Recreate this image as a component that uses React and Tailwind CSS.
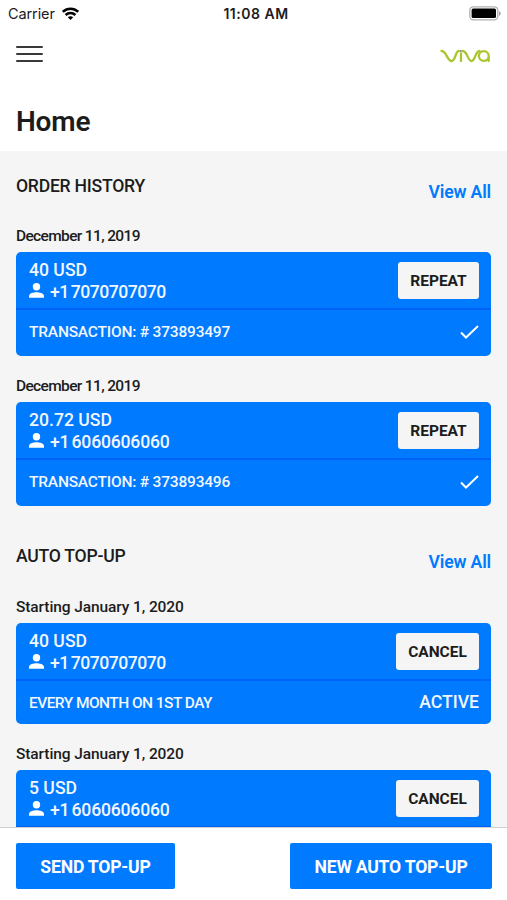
const orders = [
  { date: 'December 11, 2019', amount: '40 USD', phone: '+1 7070707070', phoneClass: 'tracking-[-0.5px]', transaction: '373893497' },
  { date: 'December 11, 2019', amount: '20.72 USD', phone: '+1 6060606060', phoneClass: 'tracking-[-0.2px]', transaction: '373893496' },
]

const topUps = [
  { date: 'Starting January 1, 2020', amount: '40 USD', phone: '+1 7070707070', phoneClass: 'tracking-[-0.5px]', schedule: 'EVERY MONTH ON 1ST DAY', status: 'ACTIVE' },
  { date: 'Starting January 1, 2020', amount: '5 USD', phone: '+1 6060606060', phoneClass: 'tracking-[-0.2px]' },
]

function StatusBar() {
  return (
    <div className="grid h-7 grid-cols-3 items-center pl-[8px] pr-[6px] leading-none text-[#1c1c1c]">
      <div className="flex items-center gap-[7px]">
        <span className="font-['Inter'] text-[14.5px] tracking-[-0.1px]">Carrier</span>
        <svg className="-mt-[2px]" width="17" height="13" viewBox="0 0 17 13" fill="none" stroke="#000" strokeWidth="2.5">
          <path d="M.8 4.8C5.2.6 11.8.6 16.2 4.8" />
          <path d="M3.6 8c2.8-2.6 7-2.6 9.8 0" />
          <path d="M8.5 12.9 5.8 10.2c1.5-1.4 3.9-1.4 5.4 0z" fill="#000" stroke="none" />
        </svg>
      </div>
      <span className="pl-[3px] text-center font-['Inter'] text-[14px] font-semibold tracking-[0.5px]">11:08 AM</span>
      <svg className="-mt-[2px] justify-self-end" width="32" height="15" viewBox="0 0 32 15">
        <rect x=".8" y=".8" width="28" height="13" rx="3.5" fill="#fff" stroke="#b0b0b0" strokeWidth="1.3" />
        <rect x="2.6" y="2.6" width="24.4" height="9.4" rx="1.5" />
        <path d="M30.3 5v5c1.6-.9 1.6-4.1 0-5z" fill="#777" />
      </svg>
    </div>
  )
}

function VivaLogo() {
  return (
    <svg className="mt-[2px]" width="50" height="14" viewBox="0 0 50 14" fill="none" stroke="#a9c62f" strokeWidth="2.3" strokeLinecap="round">
      <path d="M1.5 2C6.5 1.7 7 12 11.5 12S15 2.3 18.7 2" />
      <path d="M21 4.500V12" />
      <path d="M22.5 2C27.5 1.7 27.5 12 31.5 12S35 2.3 39.5 2" />
      <path d="M48.7 12V7a4.9 4.9 0 1 0-4.9 4.9c2.7 0 4.9-1.8 4.9-4.9" />
      <circle cx="20.7" cy="2" r="1.1" fill="#8585a5" stroke="none" />
    </svg>
  )
}

function PersonIcon() {
  return (
    <svg className="-mt-[4px]" width="15" height="15" viewBox="0 0 15 15" fill="#fff">
      <circle cx="7.5" cy="3.8" r="3.7" />
      <path d="M0 14.8v-2C0 10.1 5 9.2 7.5 9.2s7.5.9 7.5 3.6v2z" />
    </svg>
  )
}

function SectionTitle({ title }) {
  return (
    <div className="flex h-[40px] items-start justify-between leading-6">
      <h2 className="text-[17.6px] font-medium tracking-[-0.25px]">{title}</h2>
      <a className="mt-[6px] text-[17.6px] font-semibold tracking-[-0.15px] text-[#007aff]">View All</a>
    </div>
  )
}

function Card({ item, action, actionClass, children }) {
  return (
    <div className={`overflow-hidden bg-[#007aff] text-[#f2f7ff] ${children ? 'rounded-[5px]' : 'rounded-t-[5px]'}`}>
      <div className="flex h-[58px] items-start justify-between border-b-2 border-[#0062f8] pl-[13px] pr-[12px]">
        <div className="pt-[7px] text-[17.6px] font-medium leading-[22px]">
          <p>{item.amount}</p>
          <p className="flex items-center gap-[6px]">
            <PersonIcon />
            <span className={`[word-spacing:-2px] ${item.phoneClass}`}>{item.phone}</span>
          </p>
        </div>
        <button className={`mt-[10px] h-[37px] rounded-[3px] bg-[#f5f5f5] pt-[2px] text-[15.5px] font-bold text-[#1c1c1c] ${actionClass}`}>{action}</button>
      </div>
      {children}
    </div>
  )
}

export default function App() {
  return (
    <div className="flex h-[900px] w-[507px] flex-col overflow-hidden bg-white font-['Roboto',sans-serif] text-[#1c1c1c]">
      <header className="h-[151px] shrink-0">
        <StatusBar />
        <div className="flex h-[54px] items-center justify-between pl-[16px] pr-[17px]">
          <div className="-mt-[2px] flex flex-col gap-[5px]">
            <span className="h-[2px] w-[27px] rounded-full bg-[#383838]" />
            <span className="h-[2px] w-[27px] rounded-full bg-[#383838]" />
            <span className="h-[2px] w-[27px] rounded-full bg-[#383838]" />
          </div>
          <VivaLogo />
        </div>
        <h1 className="mt-[22px] pl-[16px] text-[28px] font-semibold leading-9 tracking-[-0.2px]">Home</h1>
      </header>

      <main className="min-h-0 flex-1 overflow-hidden bg-[#f5f5f5] px-[16px] pt-[23px]">
        <SectionTitle title="ORDER HISTORY" />
        <div className="mt-[12px] space-y-[20px]">
          {orders.map((order) => (
            <div key={order.transaction}>
              <p className="mb-[6px] text-[15.5px] font-medium leading-5 tracking-[-0.65px]">{order.date}</p>
              <Card item={order} action="REPEAT" actionClass="w-[81px]">
                <div className="flex h-[46px] items-center justify-between pl-[13px] pr-[12px]">
                  <span className="text-[15.5px] font-medium tracking-[-0.2px]">TRANSACTION: # {order.transaction}</span>
                  <svg className="-mt-[2px]" width="19" height="14" viewBox="0 0 19 14" fill="none" stroke="#fff" strokeWidth="2">
                    <path d="m1 7.5 5 5L18 1" />
                  </svg>
                </div>
              </Card>
            </div>
          ))}
        </div>

        <div className="mt-[38px]">
          <SectionTitle title="AUTO TOP-UP" />
        </div>
        <div className="mt-[13px] space-y-[20px]">
          {topUps.map((topUp) => (
            <div key={topUp.phone}>
              <p className="mb-[6px] text-[15.5px] font-medium leading-5 tracking-[-0.1px]">{topUp.date}</p>
              <Card item={topUp} action="CANCEL" actionClass="w-[83px]">
                {topUp.schedule && (
                  <div className="flex h-[43px] items-center justify-between pl-[13px] pr-[12px]">
                    <span className="pt-[2px] text-[15.5px] font-medium tracking-[-0.55px]">{topUp.schedule}</span>
                    <span className="text-[17.6px] font-medium">{topUp.status}</span>
                  </div>
                )}
              </Card>
            </div>
          ))}
        </div>
      </main>

      <footer className="flex h-[73px] shrink-0 items-start justify-between border-t border-[#d0d0d0] bg-white pl-[16px] pr-[15px] pt-[15px]">
        <button className="h-[46px] w-[159px] rounded-[2px] bg-[#007aff] pt-[2px] text-[17.6px] font-bold tracking-[-0.2px] text-white">SEND TOP-UP</button>
        <button className="h-[46px] w-[202px] rounded-[2px] bg-[#007aff] pt-[2px] text-[17.6px] font-bold tracking-[-0.2px] text-white">NEW AUTO TOP-UP</button>
      </footer>
    </div>
  )
}
